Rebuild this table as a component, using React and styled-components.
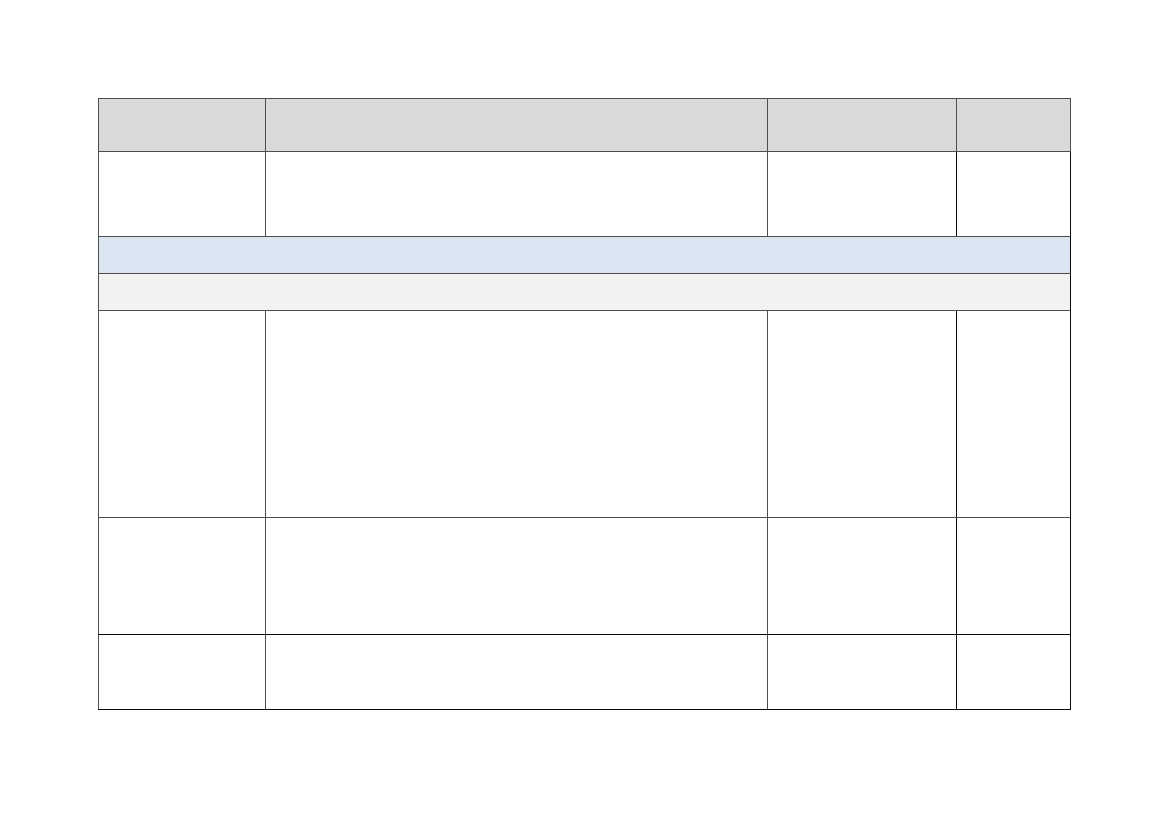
import React from 'react'
import styled, { createGlobalStyle } from 'styled-components';

const GlobalStyle = createGlobalStyle`
  html, body {
    margin: 0;
    padding: 0;
    background: #ffffff;
    font-family: "Liberation Sans", Arial, sans-serif;
  }
`;

const Page = styled.div`
  width: 1169px;
  height: 827px;
  padding: 98px 0 0 98px;
  box-sizing: border-box;
`;

const Table = styled.table`
  border-collapse: collapse;
  table-layout: fixed;
  width: 972px;
`;

const Row = styled.tr`
  height: ${({ h }) => h}px;
  background: ${({ bg }) => bg || '#ffffff'};
`;

// gray rule by default, black where the source doc used a darker line
const Cell = styled.td`
  padding: 0;
  border: 1px solid #4d4d4d;
  border-right-color: ${({ darkRight }) => (darkRight ? '#0a0a0a' : '#4d4d4d')};
  border-bottom-color: ${({ darkBottom }) => (darkBottom ? '#0a0a0a' : '#4d4d4d')};
`;

const BandCell = styled.td`
  padding: 0;
  border: 1px solid #4d4d4d;
  border-right-color: #0a0a0a;
`;

const colWidths = [167, 502, 189, 114];

const bodyRows = [
  { h: 85 },
  { band: '#dbe5f1', h: 37 },
  { band: '#f2f2f2', h: 37 },
  { h: 207 },
  { h: 117, darkBottom: true },
  { h: 75, darkBottom: true },
];

export default function App() {
  return (
    <>
      <GlobalStyle />
      <Page>
        <Table>
          <colgroup>
            {colWidths.map((w, i) => <col key={i} style={{ width: w }} />)}
          </colgroup>
          <tbody>
            <Row h={53} bg="#d9d9d9">
              {colWidths.map((_, i) => <Cell key={i} />)}
            </Row>
            {bodyRows.map((r, idx) =>
              r.band ? (
                <Row key={idx} h={r.h} bg={r.band}>
                  <BandCell colSpan={4} />
                </Row>
              ) : (
                <Row key={idx} h={r.h}>
                  <Cell darkBottom={r.darkBottom} />
                  <Cell darkBottom={r.darkBottom} />
                  <Cell darkBottom={r.darkBottom} darkRight />
                  <Cell darkBottom={r.darkBottom} darkRight />
                </Row>
              )
            )}
          </tbody>
        </Table>
      </Page>
    </>
  );
}
